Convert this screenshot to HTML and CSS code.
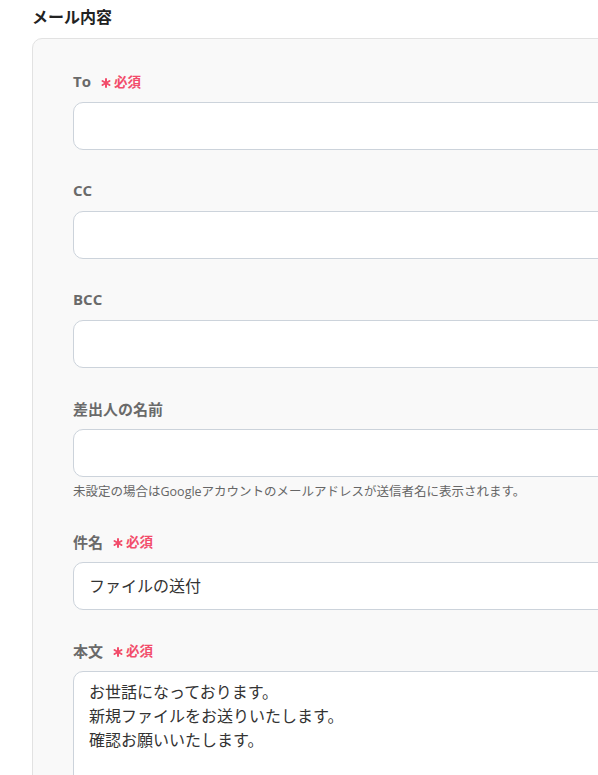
FILE: index.html
```html
<!DOCTYPE html>
<html lang="ja">
<head>
<meta charset="utf-8">
<link rel="stylesheet" href="styles.css">
</head>
<body>
<div class="page">
  <h2 class="title">メール内容</h2>
  <div class="panel">
    <div class="field">
      <div class="label">To<span class="req"><svg class="ast" viewBox="0 0 10 10" width="10" height="10"><g stroke="#f24d6b" stroke-width="2" stroke-linecap="round"><line x1="5" y1="1" x2="5" y2="9"/><line x1="1.5" y1="3" x2="8.5" y2="7"/><line x1="1.5" y1="7" x2="8.5" y2="3"/></g></svg>必須</span></div>
      <div class="input"></div>
    </div>
    <div class="field">
      <div class="label">CC</div>
      <div class="input"></div>
    </div>
    <div class="field">
      <div class="label">BCC</div>
      <div class="input"></div>
    </div>
    <div class="field">
      <div class="label">差出人の名前</div>
      <div class="input"></div>
      <div class="help">未設定の場合はGoogleアカウントのメールアドレスが送信者名に表示されます。</div>
    </div>
    <div class="field">
      <div class="label">件名<span class="req"><svg class="ast" viewBox="0 0 10 10" width="10" height="10"><g stroke="#f24d6b" stroke-width="2" stroke-linecap="round"><line x1="5" y1="1" x2="5" y2="9"/><line x1="1.5" y1="3" x2="8.5" y2="7"/><line x1="1.5" y1="7" x2="8.5" y2="3"/></g></svg>必須</span></div>
      <div class="input">ファイルの送付</div>
    </div>
    <div class="field">
      <div class="label">本文<span class="req"><svg class="ast" viewBox="0 0 10 10" width="10" height="10"><g stroke="#f24d6b" stroke-width="2" stroke-linecap="round"><line x1="5" y1="1" x2="5" y2="9"/><line x1="1.5" y1="3" x2="8.5" y2="7"/><line x1="1.5" y1="7" x2="8.5" y2="3"/></g></svg>必須</span></div>
      <div class="input area">お世話になっております。<br>新規ファイルをお送りいたします。<br>確認お願いいたします。</div>
    </div>
  </div>
</div>
</body>
</html>
```
FILE: styles.css
```css
html, body {
  margin: 0;
  padding: 0;
  background: #ffffff;
  overflow: hidden;
}
body {
  width: 598px;
  height: 775px;
  font-family: "Open Sans", "Noto Sans CJK JP", sans-serif;
}
.page {
  padding: 5px 0 0 32px;
  width: 800px;
}
.title {
  margin: 0 0 9px 0;
  font-size: 16px;
  line-height: 24px;
  font-weight: bold;
  color: #222222;
}
.panel {
  background: #f9f9f9;
  border: 1px solid #e2e2e2;
  border-radius: 10px;
  padding: 32px 40px 40px 40px;
  width: 700px;
}
.field {
  margin-bottom: 30px;
}
.label {
  display: flex;
  align-items: center;
  height: 20px;
  margin-bottom: 11px;
  font-size: 15px;
  font-weight: bold;
  color: #6a6a6a;
}
.req {
  display: inline-flex;
  align-items: center;
  margin-left: 10px;
  font-size: 13.5px;
  font-weight: bold;
  color: #f24d6b;
}
.ast {
  margin-right: 3px;
  position: relative;
  top: 2px;
}
.input {
  height: 48px;
  box-sizing: border-box;
  background: #ffffff;
  border: 1px solid #ccd3db;
  border-radius: 10px;
  padding: 0 15px;
  font-size: 16px;
  line-height: 46px;
  color: #333333;
}
.input.area {
  height: 200px;
  padding-top: 8px;
  line-height: 24px;
}
.help {
  margin-top: 6px;
  font-size: 12.5px;
  line-height: 18px;
  color: #666666;
}
```
